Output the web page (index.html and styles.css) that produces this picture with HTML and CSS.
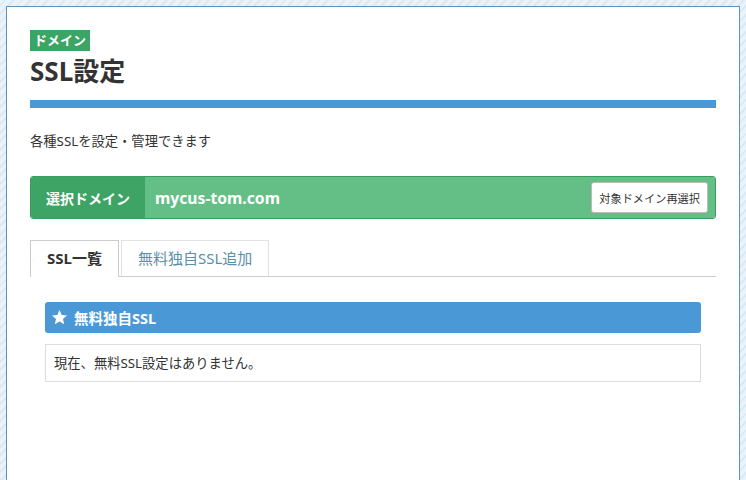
FILE: index.html
```html
<!DOCTYPE html>
<html lang="ja">
<head>
    <meta charset="UTF-8">
    <meta name="viewport" content="width=device-width, initial-scale=1.0">
    <title>SSL設定</title>
    <link rel="stylesheet" href="styles.css">
</head>
<body>
    <div class="page">
        <span class="tag">ドメイン</span>
        <h1 class="title">SSL設定</h1>
        <div class="title-bar"></div>
        <p class="desc">各種SSLを設定・管理できます</p>

        <div class="domain-bar">
            <div class="domain-label">選択ドメイン</div>
            <div class="domain-value">
                <span class="domain-name">mycus-tom.com</span>
                <button class="reselect">対象ドメイン再選択</button>
            </div>
        </div>

        <div class="tabs">
            <div class="tab active">SSL一覧</div>
            <div class="tab">無料独自SSL追加</div>
        </div>

        <div class="panel">
            <div class="panel-head">
                <svg class="star" viewBox="0 0 24 24" width="17" height="17">
                    <path fill="#fff" d="M12 1.5l3.1 7.1 7.6.6-5.8 5 1.8 7.5L12 17.7l-6.7 4 1.8-7.5-5.8-5 7.6-.6z"/>
                </svg>
                <span>無料独自SSL</span>
            </div>
            <div class="panel-body">現在、無料SSL設定はありません。</div>
        </div>
    </div>
</body>
</html>
```

FILE: styles.css
```css
html, body {
    margin: 0;
    height: 100%;
}
body {
    font-family: "Noto Sans", "Noto Sans CJK JP", sans-serif;
    color: #333;
    background-color: #eaf3fa;
    background-image: repeating-linear-gradient(-45deg, #eaf3fa 0, #eaf3fa 4px, #d9e9f5 4px, #d9e9f5 6px);
    padding: 6px 6px 0;
    box-sizing: border-box;
    overflow: hidden;
}
.page {
    background: #fff;
    border: 1px solid #5a93c0;
    padding: 23px 23px 120px;
    min-height: 600px;
}
.tag {
    display: block;
    width: max-content;
    background: #3aa564;
    color: #fff;
    font-size: 13px;
    font-weight: bold;
    line-height: 21px;
    padding: 0 4px;
}
.title {
    margin: 3px 0 0;
    font-size: 26px;
    line-height: 34px;
    font-weight: bold;
    color: #333;
}
.title-bar {
    margin-top: 12px;
    height: 8px;
    background: #4a98d6;
}
.desc {
    margin: 23px 0 0;
    font-size: 13.3px;
    line-height: 20px;
}
.domain-bar {
    margin-top: 25px;
    display: flex;
    height: 41px;
    border: 1px solid #3a9c5e;
    border-radius: 3px;
    overflow: hidden;
}
.domain-label {
    width: 114px;
    background: #3ea465;
    color: #fff;
    font-size: 14px;
    font-weight: bold;
    display: flex;
    align-items: center;
    justify-content: center;
}
.domain-value {
    flex: 1;
    background: #64bf87;
    display: flex;
    align-items: center;
    justify-content: space-between;
    padding: 0 7px 0 10px;
}
.domain-name {
    color: #fff;
    font-size: 15.7px;
    font-weight: bold;
}
.reselect {
    font-family: inherit;
    font-size: 11.2px;
    color: #333;
    background: #fff;
    border: 1px solid #bbb;
    border-radius: 3px;
    height: 31px;
    padding: 0 7px;
}
.tabs {
    margin-top: 21px;
    display: flex;
    gap: 2px;
    border-bottom: 1px solid #ccc;
}
.tab {
    height: 35px;
    line-height: 35px;
    padding: 0 16px;
    font-size: 15px;
    color: #5b8fa8;
    border: 1px solid #e2e2e2;
    border-bottom: none;
}
.tab.active {
    color: #333;
    font-weight: bold;
    border-color: #ccc;
    background: #fff;
    margin-bottom: -1px;
    height: 36px;
}
.panel {
    margin: 25px 15px 0;
}
.panel-head {
    height: 31px;
    background: #4a98d6;
    border-radius: 3px;
    color: #fff;
    font-size: 14.5px;
    font-weight: bold;
    display: flex;
    align-items: center;
    gap: 6px;
    padding: 0 6px;
}
.star {
    display: block;
}
.panel-body {
    margin-top: 11px;
    border: 1px solid #ddd;
    height: 36px;
    line-height: 36px;
    padding: 0 8px;
    font-size: 13.3px;
}
```
